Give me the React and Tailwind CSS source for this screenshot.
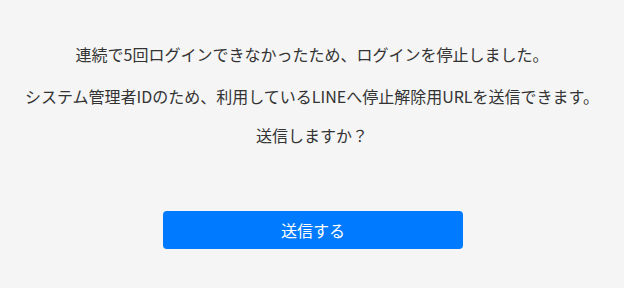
export default function App() {
  return (
    <div
      className="w-[624px] h-[288px] bg-[#f5f5f5] text-[#333333] overflow-hidden"
      style={{ fontFamily: '"Noto Sans CJK JP", "Noto Sans", sans-serif' }}
    >
      <div className="flex flex-col items-center pt-[42px] text-[16px] leading-[24px]">
        <p>連続で5回ログインできなかったため、ログインを停止しました。</p>
        <p className="mt-[18px]">システム管理者IDのため、利用しているLINEへ停止解除用URLを送信できます。</p>
        <p className="mt-[15px]">送信しますか？</p>
        <button className="mt-[64px] ml-[2px] w-[300px] h-[38px] rounded-[4px] bg-[#007bff] text-white text-[16px]">
          送信する
        </button>
      </div>
    </div>
  );
}
